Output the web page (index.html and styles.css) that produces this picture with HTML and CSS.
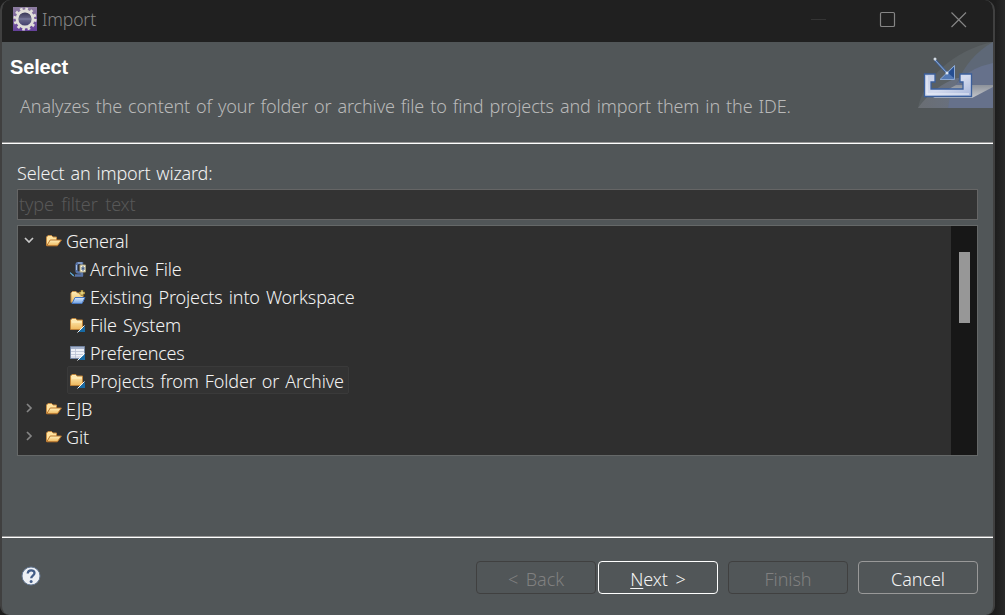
FILE: index.html
```html
<!DOCTYPE html>
<html lang="en">
<head>
<meta charset="utf-8">
<title>Import</title>
<link rel="stylesheet" href="styles.css">
</head>
<body>
<svg class="defs" width="0" height="0" aria-hidden="true">
  <defs>
    <linearGradient id="gold" x1="0" y1="0" x2="0" y2="1"><stop offset="0" stop-color="#fff0bd"/><stop offset="1" stop-color="#efb85c"/></linearGradient>
    <linearGradient id="sky" x1="0" y1="0" x2="0" y2="1"><stop offset="0" stop-color="#dcecff"/><stop offset="1" stop-color="#6f9fe0"/></linearGradient>
    <linearGradient id="purple" x1="0" y1="0" x2="0" y2="1"><stop offset="0" stop-color="#8d7da0"/><stop offset="1" stop-color="#64409a"/></linearGradient>
    <linearGradient id="lens" x1="0" y1="0" x2="0" y2="1"><stop offset="0" stop-color="#2f2d4d"/><stop offset=".5" stop-color="#6a698a"/><stop offset="1" stop-color="#3b3566"/></linearGradient>
    <linearGradient id="tray" x1="0" y1="0" x2="1" y2="1"><stop offset="0" stop-color="#c5cee6"/><stop offset=".5" stop-color="#d5dcef"/><stop offset="1" stop-color="#a5b4da"/></linearGradient>
    <linearGradient id="haze" x1="0" y1="0" x2="1" y2="0"><stop offset="0" stop-color="#6a6e73"/><stop offset="1" stop-color="#66728b"/></linearGradient>
    <linearGradient id="shine" x1="0" y1="0" x2="0" y2="1"><stop offset="0" stop-color="#8e939b"/><stop offset="1" stop-color="#c5c7cc"/></linearGradient>
    <symbol id="open-folder" viewBox="0 0 16 12">
      <path d="M.5 10.5V2L2 .5h3.5L7 2h3.500v3" fill="#ffe3a0" stroke="#c58a43"/>
      <path d="M.7 10.800 4.200 5h11.200l-4 5.800z" fill="url(#gold)" stroke="#b9742b"/>
    </symbol>
    <symbol id="folder-import" viewBox="0 0 16 15">
      <path d="M.5 11.500V2L2 .5h3.800L7 2h5.500v9.500z" fill="url(#gold)" stroke="#bd8137"/>
      <path d="M2 4h10" stroke="#fff3c9"/>
      <path d="M15 8v6H8z" fill="#176aa5"/><path d="M14.500 7.500 7.500 14.500" stroke="#f3f7fb"/>
    </symbol>
  </defs>
</svg>
<main class="window">
  <header class="titlebar">
    <svg class="app-icon" viewBox="0 0 24 24"><path d="M0 0h24v24H0z" fill="url(#purple)"/><circle cx="12" cy="12" r="10" fill="none" stroke="#e0ded9" stroke-width="3.200" stroke-dasharray="2.600 2.636"/><circle cx="12" cy="12" r="8" fill="url(#lens)" stroke="#e0ded9" stroke-width="2.800"/><path d="M6 12h12" stroke="#7d7fa2"/></svg>
    <span class="title">Import</span>
    <svg class="controls" viewBox="0 0 158 20"><path d="M1 9.500h15" stroke="#343434"/><rect x="70.500" y="2.500" width="14" height="14" rx="1.300" fill="none" stroke="#858585" stroke-width="1.200"/><path d="m141.500 2.500 14.500 14.500m0-14.500-14.500 14.500" stroke="#858585" stroke-width="1.200"/></svg>
  </header>
  <section class="banner">
    <div class="banner-text"><h1>Select</h1><p>Analyzes the content of your folder or archive file to find projects and import them in the IDE.</p></div>
    <svg class="banner-art" viewBox="0 0 75 66">
      <path d="M0 66C5 38 35 8 75 0v66z" fill="#5a6063"/>
      <path d="M0 66Q16 44 39 36h36v30z" fill="url(#haze)"/>
      <path d="M38 43Q50 14 75 0v66H30z" fill="#5e6877"/>
      <path d="M30 66Q33 30 75 21v45z" fill="#66718b"/>
      <path d="M38 43h37v2L54 56H15z" fill="url(#shine)"/>
      <path d="M6.500 32H17v8h-4v7h32v-7h-3v-8h11.500v22.500h-47z" fill="url(#tray)" stroke="#3b5f9c" stroke-width="1.300"/>
      <path d="M9 34v18h42" fill="none" stroke="#edf1fa"/>
      <path d="m17 18 13 14" stroke="#41639a" stroke-width="2.500"/><path d="m17 18 12 13" stroke="#90add5"/>
      <path d="M36.500 23.500v14H22z" fill="#5379b4" stroke="#8da9d1"/><path d="M36 25v11l-6-5z" fill="#254e91"/>
      <circle cx="17" cy="17" r="1.500" fill="#d4dce5"/><circle cx="29" cy="31" r="1.500" fill="#dbe5f2"/>
    </svg>
  </section>
  <section class="content">
    <label for="filter">Select an import wizard:</label>
    <input id="filter" class="filter" placeholder="type filter text">
    <div class="tree">
      <div class="rows">
        <div class="row parent"><svg class="arrow" viewBox="0 0 10 10"><path d="m1 3 4 4 4-4" fill="none" stroke="#c8c8c8" stroke-width="1.700"/></svg><svg class="folder"><use href="#open-folder"/></svg><span class="tight">General</span></div>
        <div class="row child"><svg class="item-icon" viewBox="0 0 16 15"><path d="M6.500 9V3q0-2 2-2H12v2M6.500 8.500q0 2 2 2H12V14M5 13.500h8" fill="none" stroke="#5874a8" stroke-width="2.400"/><path d="M6.500 3v5M8 1h4" stroke="#a6bde0"/><path d="M10 3h5.500v7H10z" fill="#fff9dc" stroke="#aaa17c"/><path d="M12 5v3h2V5zm0 1.500h2" fill="none" stroke="#47618c"/><path d="M0 10v1l3 3h1v-1z" fill="#1684c4"/><path d="m0 10.500 4 4" stroke="#d7e8f3" stroke-width=".7"/></svg><span>Archive File</span></div>
        <div class="row child"><svg class="item-icon" viewBox="0 0 16 15"><path d="M1 12.500V3l1.500-1.500H6L7.500 3H13v9" fill="url(#gold)" stroke="#c5904a"/><path d="M2 13.500 5 7.500h10l-3 6z" fill="url(#sky)" stroke="#4777bf"/><path d="M12 0v6M9 3h6" stroke="#92701f" stroke-width="2.600"/><path d="M12 .5v5M9.500 3h5" stroke="#fff09e"/></svg><span>Existing Projects into Workspace</span></div>
        <div class="row child"><svg class="item-icon"><use href="#folder-import"/></svg><span>File System</span></div>
        <div class="row child"><svg class="item-icon" viewBox="0 0 16 15"><path d="M.5.500h14v12H.500z" fill="#eef1f8" stroke="#7384a1"/><path d="M1 2h13" stroke="#8d9dbd" stroke-width="1.500"/><path d="M1 5.500h13M1 8.500h13M1 11h13M5.500 3v9" stroke="#b7c0d3" stroke-width=".8"/><path d="M15 8v6H8z" fill="#176aa5"/><path d="M14.500 7.500 7.500 14.500" stroke="#fff"/></svg><span class="tight">Preferences</span></div>
        <div class="row child selected"><svg class="item-icon"><use href="#folder-import"/></svg><span>Projects from Folder or Archive</span></div>
        <div class="row parent"><svg class="arrow" viewBox="0 0 10 10"><path d="m3 1 4 4-4 4" fill="none" stroke="#858585" stroke-width="1.700"/></svg><svg class="folder"><use href="#open-folder"/></svg><span class="tight">EJB</span></div>
        <div class="row parent"><svg class="arrow" viewBox="0 0 10 10"><path d="m3 1 4 4-4 4" fill="none" stroke="#858585" stroke-width="1.700"/></svg><svg class="folder"><use href="#open-folder"/></svg><span>Git</span></div>
      </div>
      <div class="scrollbar"><div class="thumb"></div></div>
    </div>
  </section>
  <footer class="footer">
    <svg class="help" viewBox="0 0 20 20"><circle cx="10" cy="10" r="9" fill="#edf0f5" stroke="#667a96"/><path d="M6.700 7.500C7 3.300 13.500 3.500 13.500 7c0 2.600-3.300 2.500-3.300 5.200" fill="none" stroke="#435d88" stroke-width="2.300"/><circle cx="10.100" cy="15.500" r="1.500" fill="#435d88"/></svg>
    <div class="buttons"><button class="disabled" disabled>&lt; Back</button><button class="primary"><u>N</u>ext &gt;</button><button class="disabled" disabled>Finish</button><button class="cancel">Cancel</button></div>
  </footer>
</main>
</body>
</html>
```
FILE: styles.css
```css
* { box-sizing: border-box; }
body { margin: 0; width: 1005px; height: 615px; overflow: hidden; background: linear-gradient(90deg, #1d1d1d 995px, #282828 1005px); font: 300 18px/28px "Noto Sans", "Open Sans", sans-serif; letter-spacing: -.13px; word-spacing: 1.5px; color: #f2f2f2; }
.defs { position: absolute; }
svg { display: block; flex: none; }
.window { width: 995px; height: 615px; border: 2px solid #404040; border-width: 0 2px; border-radius: 10px 10px 9px 9px; background: #515658; overflow: hidden; display: flex; flex-direction: column; }
.titlebar { height: 42px; flex: none; background: #202020; display: flex; align-items: flex-start; padding: 7px 25px 0 11px; color: #858585; }
.app-icon { width: 24px; height: 24px; }
.title { margin: -2px 0 0 5px; font-size: 17.5px; }
.controls { width: 158px; height: 20px; margin: 3px 0 0 auto; }
.banner { height: 102px; flex: none; display: flex; justify-content: space-between; border-bottom: 1px solid #fff; box-shadow: inset 0 -1px #999; }
.banner h1 { margin: 11px 0 0 8px; font: bold 20px/28px "Liberation Sans", Arial, sans-serif; letter-spacing: -.15px; color: #fff; }
.banner p { margin: 11px 0 0 18px; white-space: nowrap; color: #b9b9b9; }
.banner-art { width: 75px; height: 66px; }
.content { height: 392px; flex: none; display: flex; flex-direction: column; padding: 15px 15px 0; }
.content label { height: 30px; letter-spacing: -.18px; white-space: nowrap; }
.filter { height: 31px; width: 961px; border: 1px solid #656565; border-radius: 0; background: #333; padding: 0 1px 2px; margin: 0 0 5px; font: inherit; letter-spacing: inherit; word-spacing: 3px; color: #eee; outline: 0; }
.filter::placeholder { color: #585858; opacity: 1; }
.tree { height: 231px; width: 961px; border: 1px solid #656868; display: flex; background: #2f2f2f; overflow: hidden; }
.rows { flex: 1; }
.row { height: 28px; display: flex; align-items: center; white-space: nowrap; }
.row span { padding-top: 1px; }
.row .tight { letter-spacing: -.25px; }
.parent { padding-left: 6px; }
.arrow { width: 10px; height: 10px; margin-right: 12px; }
.folder { width: 16px; height: 12px; margin: 1px 4px 0 0; }
.child { padding-left: 52px; }
.item-icon { width: 16px; height: 15px; margin: 2px 4px 0 0; }
.selected { margin-left: 49px; width: 282px; padding-left: 2px; border: 1px solid #3a3a3a; border-radius: 2px; background: #333; }
.scrollbar { width: 26px; background: #171717; padding: 26px 0 0 8px; }
.thumb { width: 11px; height: 71px; background: #979797; }
.footer { flex: 1; border-top: 1px solid #999; box-shadow: inset 0 1px #fff; display: flex; justify-content: space-between; padding: 24px 15px 0 19px; }
.help { width: 20px; height: 20px; margin-top: 5px; }
.buttons { display: flex; }
button { width: 120px; height: 33px; padding: 3px 0 0; border: 1px solid #999; border-radius: 4px; background: transparent; color: #f4f4f4; font: inherit; line-height: 28px; letter-spacing: -.05px; word-spacing: 3px; white-space: nowrap; }
.disabled { color: #808080; border-color: #404040; }
.primary { margin: 0 10px 0 2px; border-color: #fff; }
.cancel { margin-left: 10px; }
u { text-underline-offset: 2px; text-decoration-thickness: 1px; }
```
